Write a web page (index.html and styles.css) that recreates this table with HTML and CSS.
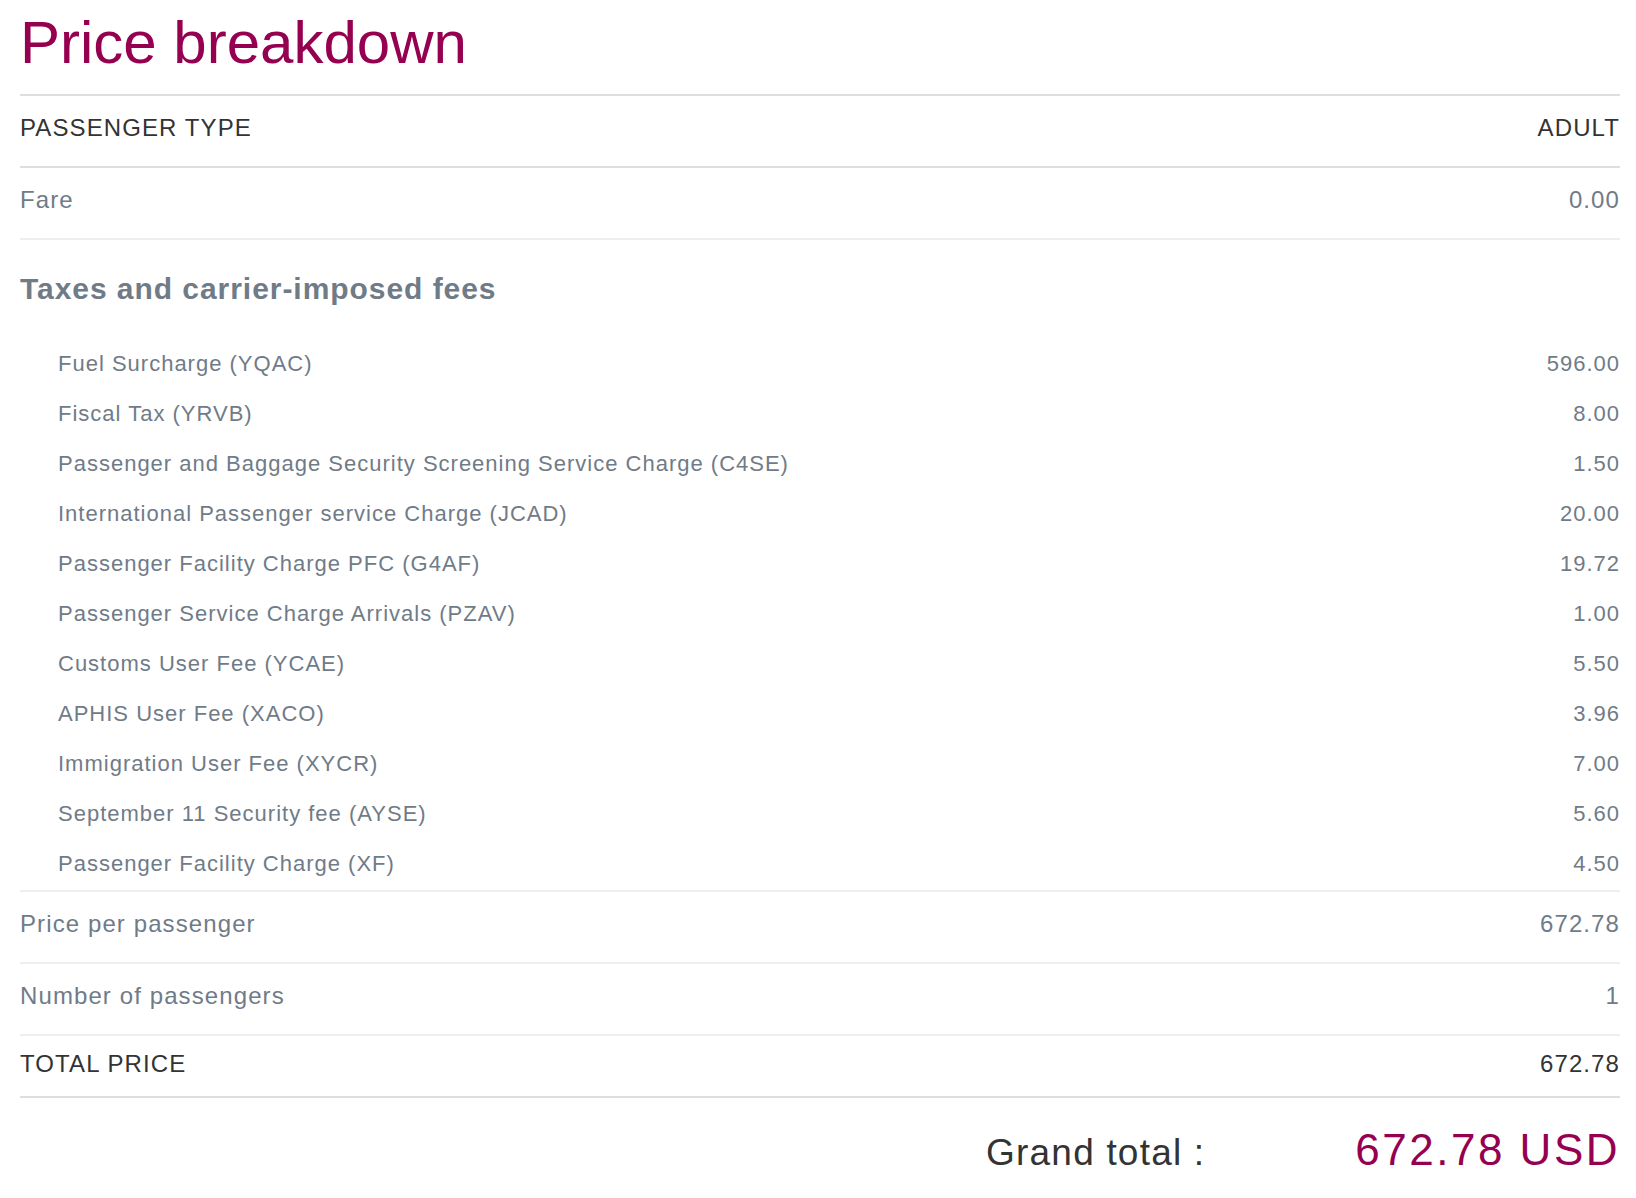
FILE: index.html
```html
<!DOCTYPE html>
<html lang="en">
<head>
<meta charset="utf-8">
<title>Price breakdown</title>
<link rel="stylesheet" href="styles.css">
</head>
<body>
<div class="page">
  <h1 class="title">Price breakdown</h1>
  <div class="breakdown">
    <div class="row row-head">
      <span>PASSENGER TYPE</span>
      <span>ADULT</span>
    </div>
    <div class="row row-muted">
      <span>Fare</span>
      <span>0.00</span>
    </div>
    <div class="taxes">
      <h2 class="taxes-title">Taxes and carrier-imposed fees</h2>
      <ul class="fees">
        <li class="fee"><span>Fuel Surcharge (YQAC)</span><span>596.00</span></li>
        <li class="fee"><span>Fiscal Tax (YRVB)</span><span>8.00</span></li>
        <li class="fee"><span>Passenger and Baggage Security Screening Service Charge (C4SE)</span><span>1.50</span></li>
        <li class="fee"><span>International Passenger service Charge (JCAD)</span><span>20.00</span></li>
        <li class="fee"><span>Passenger Facility Charge PFC (G4AF)</span><span>19.72</span></li>
        <li class="fee"><span>Passenger Service Charge Arrivals (PZAV)</span><span>1.00</span></li>
        <li class="fee"><span>Customs User Fee (YCAE)</span><span>5.50</span></li>
        <li class="fee"><span>APHIS User Fee (XACO)</span><span>3.96</span></li>
        <li class="fee"><span>Immigration User Fee (XYCR)</span><span>7.00</span></li>
        <li class="fee"><span>September 11 Security fee (AYSE)</span><span>5.60</span></li>
        <li class="fee"><span>Passenger Facility Charge (XF)</span><span>4.50</span></li>
      </ul>
    </div>
    <div class="row row-muted">
      <span>Price per passenger</span>
      <span>672.78</span>
    </div>
    <div class="row row-muted">
      <span>Number of passengers</span>
      <span>1</span>
    </div>
    <div class="row row-total">
      <span>TOTAL PRICE</span>
      <span>672.78</span>
    </div>
  </div>
  <div class="grand">
    <span class="grand-label">Grand total :</span>
    <span class="grand-amount">672.78 USD</span>
  </div>
</div>
</body>
</html>
```

FILE: styles.css
```css
html, body {
  margin: 0;
  padding: 0;
  background: #ffffff;
}

body {
  font-family: "Liberation Sans", Arial, Helvetica, sans-serif;
}

.page {
  width: 1600px;
  margin-left: 20px;
}

.title {
  margin: 8px 0 16px;
  font-size: 60px;
  line-height: 70px;
  font-weight: normal;
  color: #960050;
}

.breakdown {
  border-top: 2px solid #dedede;
}

.row {
  display: flex;
  justify-content: space-between;
  align-items: center;
  height: 72px;
  padding-bottom: 6px;
  box-sizing: border-box;
  font-size: 24px;
  letter-spacing: 1.1px;
  border-bottom: 2px solid #eeeeee;
}

.row-head {
  color: #333333;
  border-bottom-color: #dedede;
}

.row-muted {
  color: #707b88;
}

.row-total {
  color: #333333;
  height: 62px;
  padding-bottom: 4px;
  border-bottom-color: #dedede;
}

.taxes {
  padding: 31px 0 1px;
  border-bottom: 2px solid #eeeeee;
  color: #707b88;
}

.taxes-title {
  margin: 0;
  font-size: 30px;
  line-height: 36px;
  font-weight: bold;
  letter-spacing: 0.95px;
}

.fees {
  list-style: none;
  margin: 32px 0 0;
  padding: 0 0 0 38px;
}

.fee {
  display: flex;
  justify-content: space-between;
  font-size: 22px;
  line-height: 50px;
  letter-spacing: 1px;
}

.grand {
  display: flex;
  justify-content: flex-end;
  align-items: baseline;
  gap: 150px;
  margin-top: 24px;
  line-height: 56px;
}

.grand-label {
  font-size: 37px;
  letter-spacing: 1.2px;
  color: #333333;
}

.grand-amount {
  font-size: 44px;
  letter-spacing: 2.5px;
  color: #960050;
}
```
